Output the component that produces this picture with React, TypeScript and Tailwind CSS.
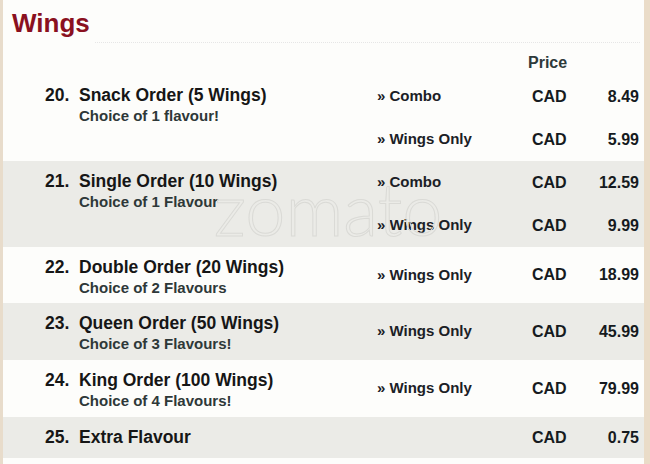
type Option = { label?: string; price: string };
type Item = { no: string; name: string; note?: string; options: Option[]; shade: boolean; h: string };

const ITEMS: Item[] = [
  {
    no: "20.",
    name: "Snack Order (5 Wings)",
    note: "Choice of 1 flavour!",
    options: [
      { label: "Combo", price: "8.49" },
      { label: "Wings Only", price: "5.99" },
    ],
    shade: false,
    h: "h-[86px]",
  },
  {
    no: "21.",
    name: "Single Order (10 Wings)",
    note: "Choice of 1 Flavour",
    options: [
      { label: "Combo", price: "12.59" },
      { label: "Wings Only", price: "9.99" },
    ],
    shade: true,
    h: "h-[86px]",
  },
  {
    no: "22.",
    name: "Double Order (20 Wings)",
    note: "Choice of 2 Flavours",
    options: [{ label: "Wings Only", price: "18.99" }],
    shade: false,
    h: "h-[56px]",
  },
  {
    no: "23.",
    name: "Queen Order (50 Wings)",
    note: "Choice of 3 Flavours!",
    options: [{ label: "Wings Only", price: "45.99" }],
    shade: true,
    h: "h-[57px]",
  },
  {
    no: "24.",
    name: "King Order (100 Wings)",
    note: "Choice of 4 Flavours!",
    options: [{ label: "Wings Only", price: "79.99" }],
    shade: false,
    h: "h-[57px]",
  },
  {
    no: "25.",
    name: "Extra Flavour",
    options: [{ price: "0.75" }],
    shade: true,
    h: "h-[41px]",
  },
];

function MenuRow({ item }: { item: Item }) {
  return (
    <div className={`flex ${item.h} ${item.shade ? "bg-[#ebebe7]" : "bg-[#fdfdfb]"}`}>
      <div className="flex w-[374px] shrink-0 pl-[42px] pt-[10px]">
        <span className="w-[34px] text-[17.5px] leading-[20px] font-bold text-[#161616]">{item.no}</span>
        <div>
          <div className="text-[17.5px] leading-[20px] font-bold text-[#161616]">{item.name}</div>
          {item.note && (
            <div className="text-[15px] leading-[21px] font-bold text-[#2e3838]">{item.note}</div>
          )}
        </div>
      </div>
      <div className="flex flex-1 flex-col justify-center pr-[4px]">
        {item.options.map((o, i) => (
          <div key={i} className="flex h-[43px] items-center">
            <span className="w-[155px] text-[15px] font-bold text-[#1b2026]">
              {o.label ? `» ${o.label}` : ""}
            </span>
            <span className="w-[50px] text-[16px] font-bold text-[#151a20]">CAD</span>
            <span className="w-[57px] text-right text-[16px] font-bold text-[#151a20]">{o.price}</span>
          </div>
        ))}
      </div>
    </div>
  );
}

export default function App() {
  return (
    <div className="relative h-[464px] w-[650px] overflow-hidden bg-[#fdfdfb] font-['Liberation_Sans',Arial,sans-serif]">
      <div className="flex h-full">
        <div className="w-[3px] shrink-0 bg-[#e8dccb]" />
        <div className="flex w-[641px] flex-col">
          <h1 className="h-[42px] pl-[9px] pt-[8px] text-[26px] leading-[30px] font-bold text-[#8a1020]">Wings</h1>
          <div className="ml-[92px] mr-[4px] border-b border-dotted border-[#e6e6e6]" />
          <div className="flex h-[32px] items-center pt-[8px]">
            <span className="ml-[525px] text-[16px] font-bold text-[#2e3a3a]">Price</span>
          </div>
          {ITEMS.map((it) => (
            <MenuRow key={it.no} item={it} />
          ))}
        </div>
        <div className="flex-1 bg-[#eadcc8]" />
      </div>
      {/* watermark */}
      <div className="pointer-events-none absolute left-[214px] top-[172px] font-['Lato',sans-serif] text-[72px] leading-none font-light text-transparent [-webkit-text-stroke:1px_#dadad6]">
        zomato
      </div>
    </div>
  );
}
